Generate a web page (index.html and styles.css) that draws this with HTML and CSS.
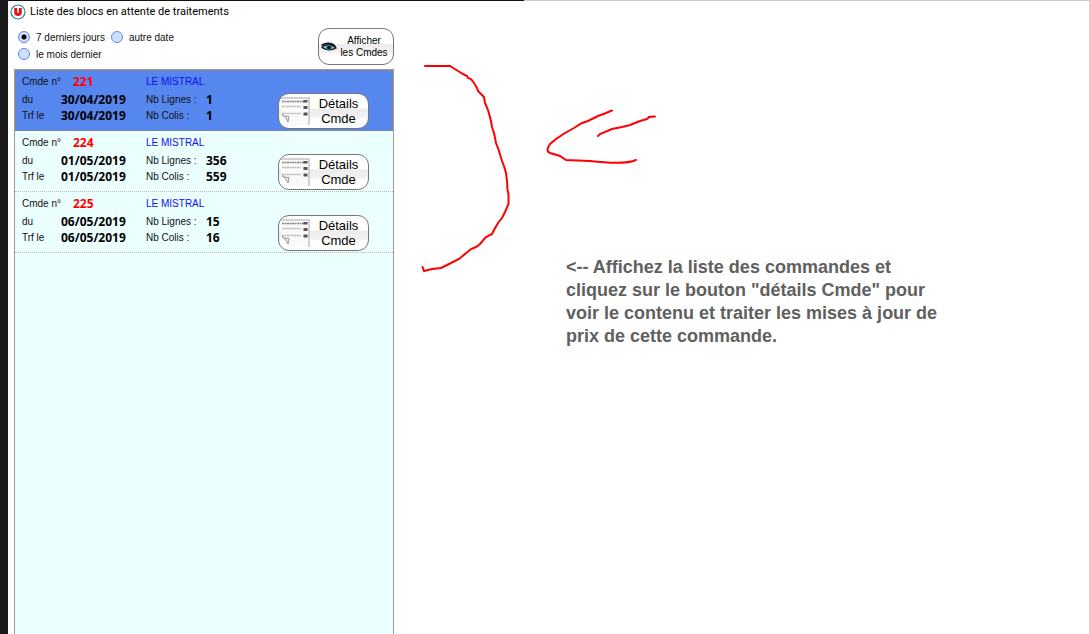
FILE: index.html
```
<!DOCTYPE html>
<html lang="fr">
<head>
<meta charset="utf-8">
<title>Liste des blocs en attente de traitements</title>
<link rel="stylesheet" href="styles.css">
</head>
<body>
<svg class="defs" aria-hidden="true">
  <symbol id="sheet" viewBox="0 0 30 28">
    <path d="M0 1H29V28H7L0 20Z" fill="#fafafa"/>
    <path d="M0 1H28V28" fill="none" stroke="#c4c4c4" stroke-width="1.500"/>
    <path d="M1 4.500H23" stroke="#888" stroke-width="1.500" stroke-dasharray="2 .5"/>
    <path d="M1 9.500H20M1 16.500H20" stroke="#bbb" stroke-width="1.500" stroke-dasharray="2 .5"/>
    <path d="M22.500 3h4v2.500h-4zM22.500 9h4v3h-4zM22.500 15.500h4v3h-4z" fill="#555"/>
    <path d="M1 17.500Q4 20 8 19.500L7 25Q6 21 1 17.500Z" fill="#eee" stroke="#999"/>
  </symbol>
</svg>
<div class="app">
  <main class="panel">
    <header class="title">
      <svg class="logo" viewBox="0 0 16 16" aria-hidden="true">
        <circle cx="8" cy="8" r="7" fill="#fff" stroke="#2b8795" stroke-width="1.200"/>
        <path d="M5.700 4V8.200a2.300 2.300 0 0 0 4.600 0V4" fill="none" stroke="#e8141c" stroke-width="3"/>
      </svg>
      <h1>Liste des blocs en attente de traitements</h1>
    </header>
    <form class="filters">
      <div class="choices">
        <div class="choice-row">
          <label><input type="radio" name="period" checked>7 derniers jours</label>
          <label><input type="radio" name="period">autre date</label>
        </div>
        <div class="choice-row">
          <label><input type="radio" name="period">le mois dernier</label>
        </div>
      </div>
      <button type="button" class="btn btn-show">
        <svg class="eye" viewBox="0 0 16 12" aria-hidden="true">
          <path d="M0 4C3 1 11 0 15 5L14 6C10 3 5 3 1 5Z" fill="#111"/>
          <path d="M1 6.500C4 3 11 3 15 7C11 9.500 5 9.500 1 6.500Z" fill="#b9cdd4" stroke="#111" stroke-width="1.200"/>
          <circle cx="8" cy="6.500" r="2.800" fill="#176f91"/><circle cx="8" cy="6.500" r="1.500" fill="#000"/>
        </svg>
        <span>Afficher<br>les Cmdes</span>
      </button>
    </form>
    <ul class="orders">
      <li class="order selected">
        <div class="ident"><span>Cmde n°</span><b class="num">221</b><span>du</span><b>30/04/2019</b><span>Trf le</span><b>30/04/2019</b></div>
        <div class="counts"><span class="client">LE MISTRAL</span><span>Nb Lignes :</span><b>1</b><span>Nb Colis :</span><b>1</b></div>
        <button type="button" class="btn btn-detail"><svg class="sheet" aria-hidden="true"><use href="#sheet"/></svg><span>Détails<br>Cmde</span></button>
      </li>
      <li class="order">
        <div class="ident"><span>Cmde n°</span><b class="num">224</b><span>du</span><b>01/05/2019</b><span>Trf le</span><b>01/05/2019</b></div>
        <div class="counts"><span class="client">LE MISTRAL</span><span>Nb Lignes :</span><b>356</b><span>Nb Colis :</span><b>559</b></div>
        <button type="button" class="btn btn-detail"><svg class="sheet" aria-hidden="true"><use href="#sheet"/></svg><span>Détails<br>Cmde</span></button>
      </li>
      <li class="order">
        <div class="ident"><span>Cmde n°</span><b class="num">225</b><span>du</span><b>06/05/2019</b><span>Trf le</span><b>06/05/2019</b></div>
        <div class="counts"><span class="client">LE MISTRAL</span><span>Nb Lignes :</span><b>15</b><span>Nb Colis :</span><b>16</b></div>
        <button type="button" class="btn btn-detail"><svg class="sheet" aria-hidden="true"><use href="#sheet"/></svg><span>Détails<br>Cmde</span></button>
      </li>
    </ul>
  </main>
  <aside class="help">
    <svg class="scribble" viewBox="400 50 270 230" aria-hidden="true">
      <path d="M425 66H450L458 71L463 74L467 76L468 78L471 79L474 83L477 88L478 91L481 94L484 97L485 103L488 110L491 121L492 127L494 133L496 143L499 151L502 161L504 166L506 173L507 181L507.500 190L508.500 194V204L505 212L502 218L498 223L494 230L492 234L486 237L480 244L476 247L471 249L465 254L459 259L451 263L441 268L432 269L424 271L422.500 267"/>
      <path d="M612 110.500L606 113L598 116L588 121L582 123L574 128L565 133L556 139L550 144Q545 151 550 153L560 156L566 160L590 161Q625 165 636 160"/>
      <path d="M598 136L600 134L612 129L622 127L630 125L640 121L647 119L649 117L655 116.500"/>
    </svg>
    <p class="note">&lt;-- Affichez la liste des commandes et cliquez sur le bouton "détails Cmde" pour voir le contenu et traiter les mises à jour de prix de cette commande.</p>
  </aside>
</div>
</body>
</html>
```

FILE: styles.css
```
* { box-sizing: border-box; }
body {
  margin: 0;
  background: #fff;
  color: #111;
  font: 11px/18px "Liberation Sans", Arial, sans-serif;
}
.defs { display: none; }
.app {
  display: flex;
  min-height: 100vh;
  border-left: 8px solid #1a1a1a;
}
.panel {
  display: flex;
  flex-direction: column;
  flex: 0 0 386px;
  padding-left: 6px;
  border-top: 1px solid #111;
}
.title {
  display: flex;
  align-items: center;
  gap: 4px;
  height: 22px;
  margin-left: -4px;
}
.logo { width: 16px; height: 16px; }
.title h1 {
  margin: 0;
  font: 11px/16px Roboto, sans-serif;
  color: #000;
}
.filters {
  display: flex;
  justify-content: space-between;
  align-items: center;
  height: 46px;
  padding: 1px 0 0 4px;
}
.choices { font-size: 10px; line-height: 17px; padding-bottom: 2px; }
.choice-row { display: flex; gap: 6px; }
.choice-row label { display: flex; align-items: center; gap: 6px; }
.choice-row input {
  appearance: none;
  width: 12px;
  height: 12px;
  margin: 0;
  border: 1px solid #5c8ae0;
  border-radius: 50%;
  background: #cfdffc;
}
.choice-row input:checked {
  background: radial-gradient(circle, #000 2px, #cfdffc 3px);
}
.btn {
  display: flex;
  align-items: center;
  border: 1px solid #777;
  border-radius: 11px;
  background: linear-gradient(#fff 42%, #ececec 43%, #f2f2f2 68%, #fff 72%);
  color: #000;
  font-family: "Liberation Sans", Arial, sans-serif;
  text-align: center;
}
.btn span { flex: 1; }
.btn-show {
  width: 76px;
  height: 37px;
  padding: 0 2px;
  font-size: 10px;
  line-height: 12px;
}
.eye { width: 16px; height: 12px; }
.orders {
  flex: 1;
  margin: 0;
  padding: 0;
  list-style: none;
  background: #ebffff;
  border: 1px solid #999;
  border-bottom: 0;
}
.order {
  display: flex;
  height: 61px;
  padding: 3px 24px 0 7px;
  border-bottom: 1px dotted #bbb;
}
.order.selected {
  background: #5587ee;
  border-bottom-color: #a98352;
  outline: 1px dotted #a98352;
  outline-offset: -1px;
}
.ident, .counts {
  display: grid;
  grid-template-rows: 18px 17px 16px;
  align-items: center;
  white-space: nowrap;
}
.ident { grid-template-columns: 39px 85px; }
.counts { grid-template-columns: 60px 60px; }
.ident span, .counts span { font-size: 10px; }
.order b { font: bold 12px/16px "Open Sans", sans-serif; color: #000; }
.order .num { padding-left: 12px; color: #f00; }
.order .client { grid-column: 1 / 3; color: #11e; }
.btn-detail {
  width: 91px;
  height: 36px;
  margin: 20px 0 0 auto;
  padding: 0 2px;
  font-size: 13px;
  line-height: 15px;
}
.sheet { width: 30px; height: 28px; }
.help {
  position: relative;
  flex: 1;
  padding: 255px 24px 0 172px;
  border-top: 1px solid #ccc;
  border-image: linear-gradient(90deg, #111 131px, #ccc 131px) 1;
}
.scribble {
  position: absolute;
  left: 6px;
  top: 49px;
  width: 270px;
  height: 230px;
  fill: none;
  stroke: #f00;
  stroke-width: 2;
  stroke-linecap: round;
}
.note {
  max-width: 390px;
  margin: 0;
  color: #606060;
  font-size: 18px;
  font-weight: bold;
  line-height: 23px;
}
```
